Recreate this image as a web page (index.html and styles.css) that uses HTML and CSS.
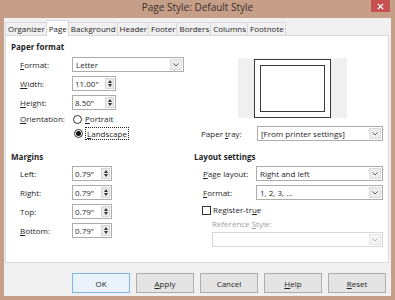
FILE: index.html
```html
<!DOCTYPE html>
<html>
  <head>
    <link rel="stylesheet" href="styles.css">
  </head>
  <body>
    <div class="window">
      <div class="titlebar">
        <span></span>
        <span class="title">Page Style: Default Style</span>
        <div class="close">
          <svg viewBox="0 0 8 8" width="7" height="7">
            <line x1="1" y1="1" x2="7" y2="7"></line>
            <line x1="7" y1="1" x2="1" y2="7"></line>
          </svg>
        </div>
      </div>

      <div class="client">
        <div class="tabs">
          <div class="tab">Organizer</div>
          <div class="tab active">Page</div>
          <div class="tab">Background</div>
          <div class="tab">Header</div>
          <div class="tab">Footer</div>
          <div class="tab">Borders</div>
          <div class="tab">Columns</div>
          <div class="tab">Footnote</div>
        </div>

        <div class="panel">
          <!-- paper format -->
          <div class="group">
            <div class="group-title">Paper format</div>
            <div class="rows">
              <div class="field">
                <span class="label"><u>F</u>ormat:</span>
                <div class="select select-format">
                  <span class="value">Letter</span>
                  <span class="drop">
                    <svg viewBox="0 0 6 4" width="6" height="4"><polyline points="0.5 0.5 3 3 5.5 0.5"></polyline></svg>
                  </span>
                </div>
              </div>
              <div class="field">
                <span class="label"><u>W</u>idth:</span>
                <div class="spin spin-wide">
                  <span class="value">11.00"</span>
                  <span class="arrows"><i class="up"></i><i class="down"></i></span>
                </div>
              </div>
              <div class="field">
                <span class="label"><u>H</u>eight:</span>
                <div class="spin spin-wide">
                  <span class="value">8.50"</span>
                  <span class="arrows"><i class="up"></i><i class="down"></i></span>
                </div>
              </div>
              <div class="field field-radio">
                <span class="label"><u>O</u>rientation:</span>
                <span class="radio"></span>
                <span><u>P</u>ortrait</span>
              </div>
              <div class="field field-radio indent">
                <span class="radio checked"></span>
                <span class="focus"><u>L</u>andscape</span>
              </div>
            </div>
          </div>

          <div class="group">
            <div class="preview">
              <div class="paper"><div class="paper-inner"></div></div>
            </div>
            <div class="field field-right tray">
              <span class="label">Paper <u>t</u>ray:</span>
              <div class="select grow">
                <span class="value">[From printer settings]</span>
                <span class="drop">
                  <svg viewBox="0 0 6 4" width="6" height="4"><polyline points="0.5 0.5 3 3 5.5 0.5"></polyline></svg>
                </span>
              </div>
            </div>
          </div>

          <!-- margins -->
          <div class="group">
            <div class="group-title">Margins</div>
            <div class="rows rows-margins">
              <div class="field">
                <span class="label">Left:</span>
                <div class="spin">
                  <span class="value">0.79"</span>
                  <span class="arrows"><i class="up"></i><i class="down"></i></span>
                </div>
              </div>
              <div class="field">
                <span class="label">Right:</span>
                <div class="spin">
                  <span class="value">0.79"</span>
                  <span class="arrows"><i class="up"></i><i class="down"></i></span>
                </div>
              </div>
              <div class="field">
                <span class="label">Top:</span>
                <div class="spin">
                  <span class="value">0.79"</span>
                  <span class="arrows"><i class="up"></i><i class="down"></i></span>
                </div>
              </div>
              <div class="field">
                <span class="label"><u>B</u>ottom:</span>
                <div class="spin">
                  <span class="value">0.79"</span>
                  <span class="arrows"><i class="up"></i><i class="down"></i></span>
                </div>
              </div>
            </div>
          </div>

          <!-- layout settings -->
          <div class="group">
            <div class="group-title">Layout settings</div>
            <div class="rows rows-margins">
              <div class="field field-right">
                <span class="label"><u>P</u>age layout:</span>
                <div class="select grow">
                  <span class="value">Right and left</span>
                  <span class="drop">
                    <svg viewBox="0 0 6 4" width="6" height="4"><polyline points="0.5 0.5 3 3 5.5 0.5"></polyline></svg>
                  </span>
                </div>
              </div>
              <div class="field field-right">
                <span class="label"><u>F</u>ormat:</span>
                <div class="select grow">
                  <span class="value">1, 2, 3, ...</span>
                  <span class="drop">
                    <svg viewBox="0 0 6 4" width="6" height="4"><polyline points="0.5 0.5 3 3 5.5 0.5"></polyline></svg>
                  </span>
                </div>
              </div>
              <div class="check-row">
                <span class="checkbox"></span>
                <span>Register-tr<u>u</u>e</span>
              </div>
              <div class="ref-label">Reference <u>S</u>tyle:</div>
              <div class="select disabled">
                <span class="value"></span>
                <span class="drop">
                  <svg viewBox="0 0 6 4" width="6" height="4"><polyline points="0.5 0.5 3 3 5.5 0.5"></polyline></svg>
                </span>
              </div>
            </div>
          </div>
        </div>

        <div class="buttons">
          <button class="btn default">OK</button>
          <button class="btn"><u>A</u>pply</button>
          <button class="btn">Cancel</button>
          <button class="btn"><u>H</u>elp</button>
          <button class="btn"><u>R</u>eset</button>
        </div>
      </div>
    </div>
  </body>
</html>
```

FILE: styles.css
```css
* {
  margin: 0;
  padding: 0;
  box-sizing: border-box;
}

body {
  width: 395px;
  height: 300px;
  overflow: hidden;
  font-family: "Open Sans", sans-serif;
  font-size: 8px;
  line-height: 12px;
  color: #1f1f1f;
}

u {
  text-underline-offset: 1px;
}

.window {
  width: 395px;
  height: 300px;
  background: #c69f88;
  display: flex;
  flex-direction: column;
}

.titlebar {
  height: 18px;
  display: grid;
  grid-template-columns: 1fr auto 1fr;
  align-items: start;
}

.title {
  font-size: 10px;
  line-height: 15px;
  color: #3a2f2a;
}

.close {
  justify-self: end;
  width: 19px;
  height: 12px;
  margin-right: 5px;
  background: #c75050;
  display: flex;
  align-items: center;
  justify-content: center;
}

.close svg {
  stroke: #fff;
  stroke-width: 1.6;
}

.client {
  flex: 1;
  margin: 0 4px 4px;
  padding: 0 2px 0 1px;
  background: #f0f0f0;
  display: flex;
  flex-direction: column;
}

/* tabs */
.tabs {
  height: 17px;
  display: flex;
  align-items: flex-end;
  position: relative;
  z-index: 1;
}

.tab {
  height: 13px;
  padding: 0 1px 0 2px;
  margin-right: -1px;
  border: 1px solid #d9d9d9;
  border-bottom: none;
  background: #f0f0f0;
  line-height: 11px;
  white-space: nowrap;
}

.tab.active {
  height: 16px;
  margin-bottom: -1px;
  padding-top: 2px;
  background: #fff;
}

/* panel */
.panel {
  background: #fff;
  border: 1px solid #d9d9d9;
  padding: 5px 5px 15px;
  display: grid;
  grid-template-columns: 183px 1fr;
  row-gap: 10px;
}

.group {
  display: flex;
  flex-direction: column;
}

.group-title {
  font-weight: 700;
  line-height: 12px;
}

.rows {
  margin-top: 2px;
  display: flex;
  flex-direction: column;
}

.rows-margins {
  margin-top: 1px;
}

.field {
  height: 19px;
  display: flex;
  align-items: center;
  padding-left: 9px;
  white-space: nowrap;
}

.field .label {
  width: 52px;
  flex: none;
}

.field-right .label {
  width: 53px;
}

.field-radio {
  height: 14px;
}

.field-radio.indent {
  padding-left: 62px;
}

.tray {
  height: 15px;
  margin-top: 8px;
  padding-left: 7px;
}

.tray .label {
  width: 56px;
}

.select {
  height: 15px;
  border: 1px solid #acacac;
  background: #fff;
  display: flex;
  align-items: stretch;
}

.select .value {
  flex: 1;
  padding-left: 3px;
  line-height: 13px;
  white-space: nowrap;
}

.select-format {
  width: 112px;
}

.grow {
  flex: 1;
}

.drop {
  width: 12px;
  margin: 1px;
  background: #ececec;
  border: 1px solid #dcdcdc;
  display: flex;
  align-items: center;
  justify-content: center;
}

.drop svg {
  fill: none;
  stroke: #606060;
  stroke-width: 1;
}

.select.disabled {
  margin: 2px 0 0 18px;
  border-color: #d6d6d6;
}

.select.disabled .drop {
  background: #f4f4f4;
  border-color: #e6e6e6;
}

.select.disabled .drop svg {
  stroke: #b5b5b5;
}

.spin {
  width: 40px;
  height: 15px;
  border: 1px solid #acacac;
  background: #fff;
  display: flex;
  align-items: stretch;
}

.spin-wide {
  width: 44px;
}

.spin .value {
  flex: 1;
  padding-left: 2px;
  line-height: 13px;
}

.arrows {
  width: 9px;
  margin: 1px;
  background: #ececec;
  border: 1px solid #d6d6d6;
  display: flex;
  flex-direction: column;
  align-items: center;
  justify-content: center;
  gap: 1px;
}

.arrows i {
  width: 0;
  height: 0;
  border-left: 2.5px solid transparent;
  border-right: 2.5px solid transparent;
}

.arrows .up {
  border-bottom: 3px solid #333;
}

.arrows .down {
  border-top: 3px solid #333;
}

.radio {
  width: 9px;
  height: 9px;
  margin: 0 3px 0 1px;
  border: 1px solid #333;
  border-radius: 50%;
  background: #fff;
  display: flex;
  align-items: center;
  justify-content: center;
}

.radio.checked::after {
  content: "";
  width: 5px;
  height: 5px;
  border-radius: 50%;
  background: #111;
}

.focus {
  border: 1px dotted #222;
  padding: 0 1px;
  line-height: 11px;
  margin-left: -1px;
}

/* preview */
.preview {
  width: 109px;
  height: 60px;
  margin: 17px 0 0 44px;
  background: #f0f0f0;
  display: flex;
  align-items: center;
  justify-content: center;
}

.paper {
  width: 77px;
  height: 59px;
  border: 1px solid #3a3a3a;
  background: #fff;
  display: flex;
  align-items: center;
  justify-content: center;
}

.paper-inner {
  width: 65px;
  height: 47px;
  border: 1px solid #3a3a3a;
}

.check-row {
  height: 16px;
  display: flex;
  align-items: center;
  padding-left: 8px;
}

.checkbox {
  width: 9px;
  height: 9px;
  margin-right: 2px;
  border: 1px solid #333;
  background: #fff;
}

.ref-label {
  padding-left: 18px;
  color: #a0a0a0;
}

/* buttons */
.buttons {
  display: flex;
  justify-content: flex-end;
  gap: 6px;
  padding: 10px 3px 0 0;
}

.btn {
  width: 58px;
  height: 20px;
  border: 1px solid #adadad;
  background: #e4e4e4;
  font-family: inherit;
  font-size: 8px;
  color: #1f1f1f;
}

.btn.default {
  border-color: #7eb4ea;
  background: #eaf2fb;
}
```
